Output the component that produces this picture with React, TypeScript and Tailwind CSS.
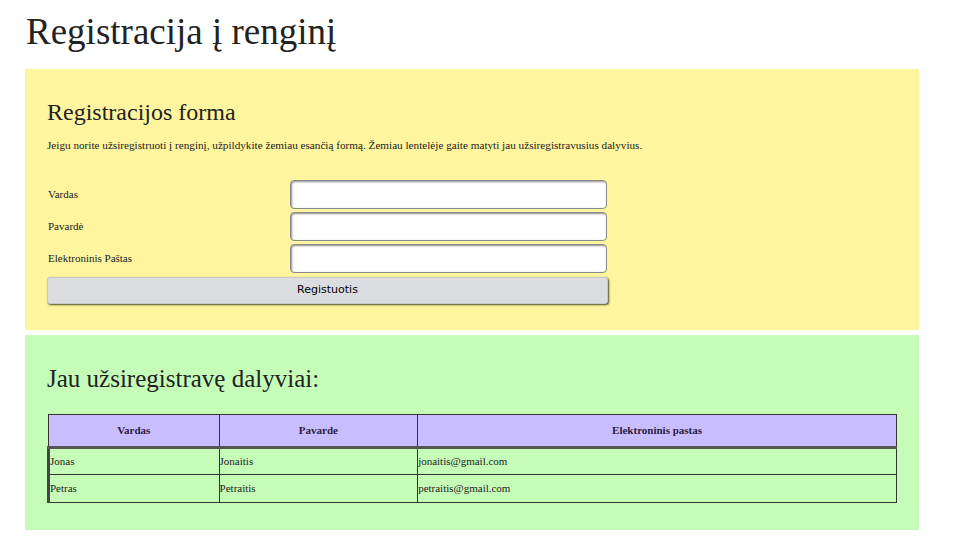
import React from "react";

const rows = [
  { v: "Jonas", p: "Jonaitis", e: "jonaitis@gmail.com" },
  { v: "Petras", p: "Petraitis", e: "petraitis@gmail.com" },
];

export default function App() {
  const serif = { fontFamily: '"Liberation Serif", "Times New Roman", serif' };
  return (
    <div className="w-[959px] h-[553px] bg-white text-[#222]" style={serif}>
      <div className="ml-[25px] w-[894px]">
        <h1 className="h-[69px] pt-[13px] pl-[1px] text-[37px] leading-[37px] font-normal">
          Registracija į renginį
        </h1>
        <section className="h-[261px] bg-[#fff59e] pl-[22px] pt-[31px]">
          <h2 className="text-[24px] leading-[24px] font-normal">Registracijos forma</h2>
          <p className="mt-[16px] text-[11.2px] leading-[11px]">
            Jeigu norite užsiregistruoti į renginį, užpildykite žemiau esančią formą. Žemiau lentelėje gaite matyti jau užsiregistravusius dalyvius.
          </p>
          <form className="mt-[29px] w-[562px] flex flex-col gap-[3px]" onSubmit={(e) => e.preventDefault()}>
            {["Vardas", "Pavardė", "Elektroninis Paštas"].map((l) => (
              <div key={l} className="flex items-center h-[29px]">
                <label className="w-[243px] pl-[1px] text-[11px] leading-[11px]">{l}</label>
                <input
                  type="text"
                  className="w-[317px] h-[29px] bg-white rounded-[4px] border border-[#8a8a8a] shadow-[inset_1px_1px_2px_rgba(0,0,0,0.45)] outline-none"
                />
              </div>
            ))}
            <button
              type="submit"
              className="mt-[1px] w-[561px] h-[27px] bg-[#dcdde1] rounded-[3px] border border-[#c8c8c8] shadow-[1px_1px_2px_rgba(0,0,0,0.7)] text-black"
              style={{ fontFamily: '"DejaVu Sans", Tahoma, sans-serif', fontSize: "11px" }}
            >
              Registuotis
            </button>
          </form>
        </section>
        <section className="mt-[5px] h-[195px] bg-[#c5fcb8] pl-[22px] pt-[31px]">
          <h2 className="text-[25px] leading-[25px] font-normal">Jau užsiregistravę dalyviai:</h2>
          <table className="mt-[23px] w-[850px] border-collapse text-[11px] leading-[11px] text-[#222]">
            <colgroup>
              <col className="w-[171px]" />
              <col className="w-[199px]" />
              <col className="w-[480px]" />
            </colgroup>
            <thead>
              <tr className="h-[33px] bg-[#c8bdff]">
                <th className="border border-[#333] border-b-[3px] border-b-[#555] font-bold text-[#2a2040]">Vardas</th>
                <th className="border border-[#333] border-b-[3px] border-b-[#555] font-bold text-[#2a2040]">Pavarde</th>
                <th className="border border-[#333] border-b-[3px] border-b-[#555] font-bold text-[#2a2040]">Elektroninis pastas</th>
              </tr>
            </thead>
            <tbody>
              {rows.map((r, i) => (
                <tr key={r.v} className={i === 0 ? "h-[27px]" : "h-[28px]"}>
                  <td className="border border-[#333] border-l-[3px] border-l-[#444] px-0 text-left">{r.v}</td>
                  <td className="border border-[#333] px-0 text-left">{r.p}</td>
                  <td className="border border-[#333] px-0 text-left">{r.e}</td>
                </tr>
              ))}
            </tbody>
          </table>
        </section>
      </div>
    </div>
  );
}
